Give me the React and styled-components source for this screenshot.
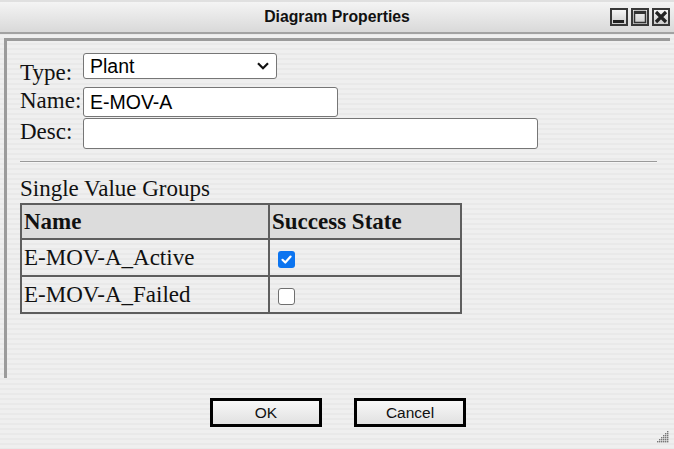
import React from 'react';
import styled, { createGlobalStyle } from 'styled-components';

const Global = createGlobalStyle`
  html, body { margin: 0; padding: 0; }
  body {
    width: 674px;
    height: 449px;
    overflow: hidden;
    background: #ededed;
    font-family: "Liberation Sans", Arial, sans-serif;
  }
`;

const Window = styled.div`
  position: relative;
  width: 674px;
  height: 449px;
  display: flex;
  flex-direction: column;
  box-sizing: border-box;
  background: repeating-linear-gradient(
    180deg,
    #efefef 0px,
    #efefef 3px,
    #e9e9e9 3px,
    #e9e9e9 5px
  );
`;

const TitleBar = styled.header`
  height: 30px;
  border-top: 2px solid #e0e0e0;
  border-bottom: 2px solid #a2a2a2;
  background: linear-gradient(#f4f4f4, #d9d9d9);
  display: grid;
  grid-template-columns: 1fr auto 1fr;
  align-items: center;
  padding-right: 4px;
`;

const Title = styled.h1`
  grid-column: 2;
  margin: 0 0 0 4px;
  font: bold 15.8px "Liberation Sans", Arial, sans-serif;
  color: #111;
`;

const Controls = styled.div`
  grid-column: 3;
  justify-self: end;
  display: flex;
  gap: 3px;
`;

const CtrlBox = styled.span`
  width: 18px;
  height: 18px;
  box-sizing: border-box;
  border: 2px solid #383838;
  background: linear-gradient(#f6f6f6, #cdcdcd);
  display: flex;
  align-items: center;
  justify-content: center;
`;

const Panel = styled.section`
  margin: 4px 4px 0 4px;
  height: 340px;
  box-sizing: border-box;
  border-top: 3px solid #9b9b9b;
  border-left: 3px solid #9b9b9b;
  padding: 12px 13px 0 13px;
  display: flex;
  flex-direction: column;
`;

const FormGrid = styled.div`
  display: grid;
  grid-template-columns: 63px auto;
  grid-template-rows: 33px 30px 31px;
  row-gap: 1px;
  justify-items: start;
`;

const Label = styled.label`
  font: 23px "Liberation Serif", "Times New Roman", serif;
  line-height: 26px;
  color: #111;
  align-self: ${(p) => (p.$bottom ? 'end' : 'start')};
  margin-top: ${(p) => (p.$bottom ? '0' : '1px')};
  white-space: nowrap;
`;

const SelectWrap = styled.div`
  position: relative;
  width: 194px;
  height: 26px;
  align-self: start;
`;

const Select = styled.select`
  appearance: none;
  width: 100%;
  height: 100%;
  box-sizing: border-box;
  border: 1px solid #767676;
  border-radius: 3px;
  background: #fff;
  padding: 0 0 0 6px;
  font: 19.5px "Liberation Sans", Arial, sans-serif;
  color: #000;
  outline: none;
`;

const Chevron = styled.svg`
  position: absolute;
  right: 8px;
  top: 9px;
  pointer-events: none;
`;

const TextInput = styled.input`
  width: ${(p) => p.$w}px;
  height: 100%;
  box-sizing: border-box;
  border: 1px solid #767676;
  border-radius: 3px;
  background: #fff;
  padding: 0 0 0 6px;
  font: 19.5px "Liberation Sans", Arial, sans-serif;
  color: #000;
  outline: none;
`;

const Rule = styled.hr`
  width: 100%;
  margin: 12px 0 0 0;
  border: 0;
  border-top: 1px solid #9a9a9a;
  border-bottom: 1px solid #f6f6f6;
`;

const SectionTitle = styled.div`
  margin-top: 13px;
  font: 23px "Liberation Serif", "Times New Roman", serif;
  line-height: 26px;
  color: #111;
`;

const Table = styled.table`
  margin-top: 1px;
  width: 442px;
  border-collapse: collapse;
  font: 23px "Liberation Serif", "Times New Roman", serif;
  color: #111;
`;

const HeadCell = styled.th`
  height: 33px;
  border: 2px solid #5e5e5e;
  background: #dcdcdc;
  text-align: left;
  padding: 0 2px;
  font-weight: bold;
  line-height: 26px;
  width: ${(p) => p.$w || 'auto'};
`;

const Cell = styled.td`
  height: 35px;
  border: 2px solid #5e5e5e;
  padding: 0 2px;
  line-height: 26px;
  vertical-align: middle;
`;

const CheckCell = styled(Cell)`
  padding-left: 8px;
`;

const CheckBox = styled.span`
  display: inline-flex;
  align-items: center;
  justify-content: center;
  width: 17px;
  height: 17px;
  box-sizing: border-box;
  border-radius: 3px;
  vertical-align: middle;
  border: ${(p) => (p.$checked ? '0' : '1px solid #6f6f6f')};
  background: ${(p) => (p.$checked ? '#0b74f0' : '#fff')};
`;

const Footer = styled.div`
  display: flex;
  justify-content: center;
  gap: 32px;
  padding: 20px 0 0 2px;
`;

const Button = styled.button`
  width: 112px;
  height: 29px;
  box-sizing: border-box;
  border: 3px solid #000;
  background: linear-gradient(#f8f8f8, #e1e1e1);
  font: 15.5px "Liberation Sans", Arial, sans-serif;
  color: #111;
  padding: 0;
`;

const Grip = styled.svg`
  position: absolute;
  right: 5px;
  bottom: 6px;
`;

function Check({ checked }) {
  return (
    <CheckBox $checked={checked}>
      {checked && (
        <svg width="13" height="13" viewBox="0 0 13 13">
          <path d="M2.5 6.8 L5.3 9.5 L10.6 3.6" fill="none" stroke="#fff" strokeWidth="2.2" strokeLinecap="round" strokeLinejoin="round" />
        </svg>
      )}
    </CheckBox>
  );
}

export default function App() {
  const gripDots = [];
  for (let r = 0; r < 6; r++) {
    for (let c = 5 - r; c < 6; c++) {
      gripDots.push(<rect key={`${r}-${c}`} x={c * 2} y={r * 2} width="1.4" height="1.4" fill="#777" />);
    }
  }
  return (
    <>
      <Global />
      <Window>
        <TitleBar>
          <Title>Diagram Properties</Title>
          <Controls>
            <CtrlBox>
              <svg width="14" height="14" viewBox="0 0 14 14">
                <rect x="1" y="10" width="11" height="3" fill="#222" />
              </svg>
            </CtrlBox>
            <CtrlBox>
              <svg width="14" height="14" viewBox="0 0 14 14">
                <rect x="1.5" y="1.5" width="11" height="11" fill="none" stroke="#333" strokeWidth="1.5" />
                <rect x="1" y="1" width="12" height="3" fill="#333" />
              </svg>
            </CtrlBox>
            <CtrlBox>
              <svg width="14" height="14" viewBox="0 0 14 14">
                <path d="M2 2 L12 12 M12 2 L2 12" stroke="#222" strokeWidth="3.2" />
              </svg>
            </CtrlBox>
          </Controls>
        </TitleBar>

        <Panel>
          <FormGrid>
            <Label $bottom>Type:</Label>
            <SelectWrap>
              <Select defaultValue="Plant">
                <option>Plant</option>
              </Select>
              <Chevron width="12" height="8" viewBox="0 0 12 8">
                <path d="M1 1.2 L6 6.2 L11 1.2" fill="none" stroke="#111" strokeWidth="2.2" />
              </Chevron>
            </SelectWrap>
            <Label>Name:</Label>
            <TextInput $w={255} defaultValue="E-MOV-A" />
            <Label>Desc:</Label>
            <TextInput $w={455} defaultValue="" />
          </FormGrid>

          <Rule />
          <SectionTitle>Single Value Groups</SectionTitle>
          <Table>
            <thead>
              <tr>
                <HeadCell $w="242px">Name</HeadCell>
                <HeadCell>Success State</HeadCell>
              </tr>
            </thead>
            <tbody>
              <tr>
                <Cell>E-MOV-A_Active</Cell>
                <CheckCell><Check checked /></CheckCell>
              </tr>
              <tr>
                <Cell>E-MOV-A_Failed</Cell>
                <CheckCell><Check /></CheckCell>
              </tr>
            </tbody>
          </Table>
        </Panel>

        <Footer>
          <Button>OK</Button>
          <Button>Cancel</Button>
        </Footer>

        <Grip width="12" height="12" viewBox="0 0 12 12">{gripDots}</Grip>
      </Window>
    </>
  );
}
